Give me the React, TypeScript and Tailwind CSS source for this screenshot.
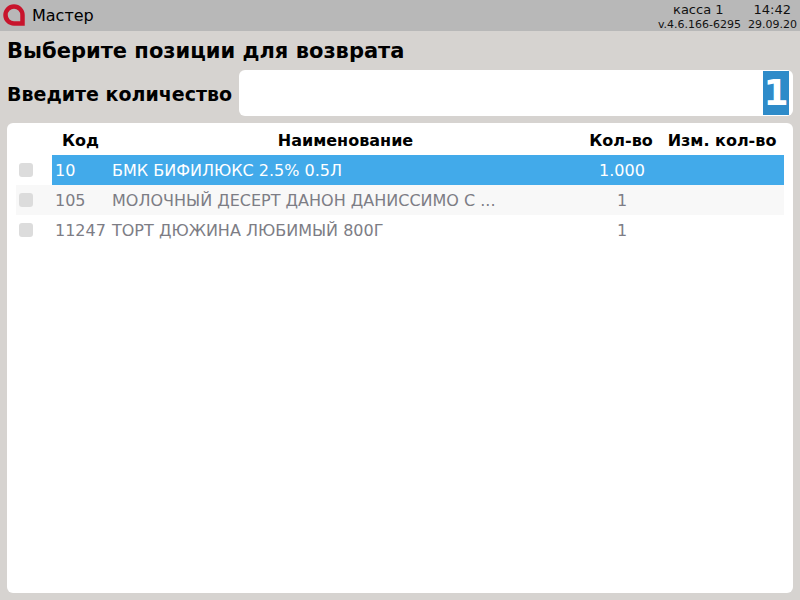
const ROWS = [
  { code: "10", name: "БМК БИФИЛЮКС 2.5% 0.5Л", qty: "1.000" },
  { code: "105", name: "МОЛОЧНЫЙ ДЕСЕРТ ДАНОН ДАНИССИМО С ...", qty: "1" },
  { code: "11247", name: "ТОРТ ДЮЖИНА ЛЮБИМЫЙ 800Г", qty: "1" },
];

function Logo() {
  return (
    <svg width="22" height="22" viewBox="0 0 22 22" aria-hidden="true" className="-mt-[1px] shrink-0">
      <path
        d="M11 2.500C6.300 2.500 2.500 6.300 2.500 11s3.800 8.500 8.500 8.500h8.500V11c0-4.700-3.800-8.500-8.500-8.500z"
        fill="none"
        stroke="#c8142c"
        strokeWidth="4.500"
      />
    </svg>
  );
}

export default function App() {
  return (
    <div className="flex h-[600px] w-[800px] flex-col overflow-hidden bg-[#d6d3d0] font-['DejaVu_Sans',sans-serif] text-black">
      {/* Top bar */}
      <header className="flex h-[31px] shrink-0 items-center justify-between bg-[#b8b8b8] pl-[3px] pr-[3px]">
        <div className="flex items-center gap-[7px]">
          <Logo />
          <span className="text-[16px] leading-none">Мастер</span>
        </div>
        <div className="flex flex-col items-end pt-[2px] text-[#111]">
          <div className="flex h-[16px] items-center text-[13px] leading-none">
            <span>касса 1</span>
            <span className="ml-[30px] mr-[6px]">14:42</span>
          </div>
          <div className="flex h-[15px] items-center text-[11px] leading-none">
            <span>v.4.6.166-6295</span>
            <span className="ml-[7px]">29.09.20</span>
          </div>
        </div>
      </header>

      {/* Title */}
      <h1 className="mt-[8px] h-[24px] pl-[7px] text-[21px] font-bold leading-[24px]">
        Выберите позиции для возврата
      </h1>

      {/* Quantity input */}
      <div className="mt-[7px] flex h-[46px] items-center pl-[7px] pr-[7px]">
        <span className="w-[232px] pt-[2px] text-[19px] font-bold leading-none">Введите количество</span>
        <div className="flex h-full flex-1 items-center justify-end rounded-[6px] bg-white pr-[4px]">
          <span className="flex h-[44px] w-[26px] items-center justify-center bg-[#2e8bc9] text-[36px] font-bold leading-none text-white">
            1
          </span>
        </div>
      </div>

      {/* Table card */}
      <div className="mb-[7px] ml-[7px] mr-[7px] mt-[7px] flex-1 rounded-[6px] bg-white pl-[9px] pr-[9px]">
        <div className="flex h-[32px] items-center pt-[4px] text-[16px] font-bold">
          <div className="w-[36px]" />
          <div className="w-[57px] text-center">Код</div>
          <div className="w-[473px] text-center">Наименование</div>
          <div className="w-[78px] text-center">Кол-во</div>
          <div className="w-[124px] text-center">Изм. кол-во</div>
        </div>
        {ROWS.map((row, i) => (
          <div
            key={row.code}
            className={`flex h-[30px] items-center text-[16px] ${i === 1 ? "bg-[#f8f8f8]" : ""}`}
          >
            <div className="flex h-full w-[36px] shrink-0 items-center pl-[3px]">
              <span className="h-[14px] w-[14px] rounded-[3px] bg-[#dcdcdc]" />
            </div>
            <div
              className={`flex h-full flex-1 items-center pt-[2px] ${
                i === 0 ? "bg-[#42aaea] text-white" : "text-[#7d7d85]"
              }`}
            >
              <div className="w-[57px] shrink-0 whitespace-nowrap pl-[3px]">{row.code}</div>
              <div className="w-[474px] shrink-0 whitespace-nowrap pl-[3px]">{row.name}</div>
              <div className="w-[78px] shrink-0 text-center">{row.qty}</div>
              <div className="w-[123px] shrink-0" />
            </div>
          </div>
        ))}
      </div>
    </div>
  );
}
